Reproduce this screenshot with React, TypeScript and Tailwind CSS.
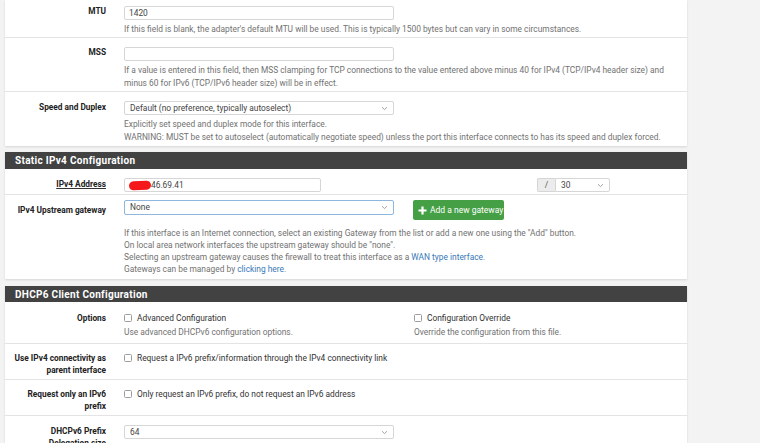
import React from "react";
import clsx from "clsx";

type RowProps = {
  label: React.ReactNode;
  labelClass?: string;
  contentClass?: string;
  last?: boolean;
  children?: React.ReactNode;
};

const Row = ({ label, labelClass, contentClass, last, children }: RowProps) => (
  <div className={clsx("flex", !last && "border-b border-[#e4e4e4]")}>
    <div
      className={clsx(
        "w-[101px] shrink-0 text-right text-[8.3px] font-bold leading-[12px] text-[#222]",
        labelClass
      )}
    >
      {label}
    </div>
    <div className={clsx("ml-[18px] min-w-0 flex-1", contentClass)}>{children}</div>
  </div>
);

const Chevron = () => (
  <svg width="7" height="5" viewBox="0 0 7 5" className="shrink-0">
    <path d="M1 1.2 L3.5 3.6 L6 1.2" fill="none" stroke="#9a9a9a" strokeWidth="0.9" />
  </svg>
);

const Input = ({ value, w = "w-[270px]" }: { value?: React.ReactNode; w?: string }) => (
  <div
    className={clsx(
      "flex h-[14px] items-center rounded-[2px] border border-[#d6d6d6] bg-white px-[4px] text-[8.4px] text-[#444]",
      w
    )}
  >
    {value}
  </div>
);

const Select = ({ value, focus }: { value: string; focus?: boolean }) => (
  <div
    className={clsx(
      "flex w-[270px] items-center justify-between rounded-[2px] border bg-white pl-[5px] pr-[5px] text-[8.4px] text-[#444]",
      focus ? "h-[15px] border-[#8fb6dc]" : "h-[14px] border-[#d6d6d6]"
    )}
  >
    <span>{value}</span>
    <Chevron />
  </div>
);

const Help = ({ children, className }: { children: React.ReactNode; className?: string }) => (
  <div className={clsx("text-[8.4px] text-[#727272]", className)}>{children}</div>
);

const Check = ({ label }: { label: string }) => (
  <div className="flex items-center text-[8.4px] leading-[12px] text-[#333]">
    <span className="mr-[5px] h-[8px] w-[8px] rounded-[1.5px] border border-[#9c9c9c] bg-white" />
    {label}
  </div>
);

const Heading = ({ title, className }: { title: string; className?: string }) => (
  <div
    className={clsx(
      "flex items-center bg-[#424242] pl-[10px] text-[10px] font-bold tracking-[0.3px] text-white",
      className
    )}
  >
    {title}
  </div>
);

export default function App() {
  return (
    <div className="h-[443px] w-[760px] overflow-hidden bg-[#f3f3f3] font-['Roboto',sans-serif]">
      <div className="ml-[5px] w-[682px]">
        {/* interface settings */}
        <div className="bg-white shadow-[0_1px_2px_rgba(0,0,0,0.12)]">
          <Row label="MTU" labelClass="pt-[5px]" contentClass="pt-[6px] pb-[1px]">
            <Input value="1420" />
            <Help className="mt-[3px] leading-[13px]">
              If this field is blank, the adapter's default MTU will be used. This is typically 1500
              bytes but can vary in some circumstances.
            </Help>
          </Row>
          <Row label="MSS" labelClass="pt-[8px]" contentClass="pt-[9px] pb-[1px]">
            <Input />
            <Help className="mt-[3px] leading-[13px]">
              If a value is entered in this field, then MSS clamping for TCP connections to the value
              entered above minus 40 for IPv4 (TCP/IPv4 header size) and
              <br />
              minus 60 for IPv6 (TCP/IPv6 header size) will be in effect.
            </Help>
          </Row>
          <Row label="Speed and Duplex" labelClass="pt-[9px]" contentClass="pt-[9px] pb-[2px]" last>
            <Select value="Default (no preference, typically autoselect)" />
            <Help className="mt-[3px] leading-[13px]">
              Explicitly set speed and duplex mode for this interface.
              <br />
              WARNING: MUST be set to autoselect (automatically negotiate speed) unless the port this
              interface connects to has its speed and duplex forced.
            </Help>
          </Row>
        </div>

        {/* static ipv4 */}
        <div className="mt-[6px] bg-white shadow-[0_1px_2px_rgba(0,0,0,0.12)]">
          <Heading title="Static IPv4 Configuration" className="h-[17px]" />
          <Row
            label={<span className="underline decoration-[#333] underline-offset-[1px]">IPv4 Address</span>}
            labelClass="pt-[9px]"
            contentClass="pt-[9px] pb-[2px] flex"
          >
            <Input
              w="w-[197px]"
              value={
                <>
                  <span className="h-[9px] w-[22px] -rotate-3 rounded-full bg-[#f4181a]" />
                  <span>46.69.41</span>
                </>
              }
            />
            <div className="ml-[216px] flex h-[14px]">
              <div className="flex w-[18px] items-center justify-center rounded-l-[2px] border border-r-0 border-[#d6d6d6] bg-[#ececec] text-[8.4px] text-[#555]">
                /
              </div>
              <div className="flex w-[55px] items-center justify-between rounded-r-[2px] border border-[#d6d6d6] bg-white px-[5px] text-[8.4px] text-[#444]">
                <span>30</span>
                <Chevron />
              </div>
            </div>
          </Row>
          <Row label="IPv4 Upstream gateway" labelClass="pt-[9px]" contentClass="pt-[5px] pb-[4px]" last>
            <div className="flex items-start">
              <Select value="None" focus />
              <button className="ml-[19px] flex h-[20px] w-[91px] items-center rounded-[2px] bg-[#45a045] pl-[5px] text-[8.5px] text-white">
                <svg width="9" height="9" viewBox="0 0 9 9" className="mr-[3px]">
                  <path d="M4.5 0.5 V8.5 M0.5 4.5 H8.5" stroke="white" strokeWidth="2.2" />
                </svg>
                Add a new gateway
              </button>
            </div>
            <Help className="mt-[7px] leading-[12px]">
              If this interface is an Internet connection, select an existing Gateway from the list or
              add a new one using the "Add" button.
              <br />
              On local area network interfaces the upstream gateway should be "none".
              <br />
              Selecting an upstream gateway causes the firewall to treat this interface as a{" "}
              <span className="text-[#3878b8]">WAN type interface</span>.
              <br />
              Gateways can be managed by <span className="text-[#3878b8]">clicking here</span>.
            </Help>
          </Row>
        </div>

        {/* dhcp6 */}
        <div className="mt-[7px] bg-white shadow-[0_1px_2px_rgba(0,0,0,0.12)]">
          <Heading title="DHCP6 Client Configuration" className="h-[16px]" />
          <Row label="Options" labelClass="pt-[10px]" contentClass="pt-[10px] pb-[5px] flex">
            <div className="w-[290px]">
              <Check label="Advanced Configuration" />
              <Help className="mt-[2px] leading-[12px]">Use advanced DHCPv6 configuration options.</Help>
            </div>
            <div>
              <Check label="Configuration Override" />
              <Help className="mt-[2px] leading-[12px]">Override the configuration from this file.</Help>
            </div>
          </Row>
          <Row
            label={
              <>
                Use IPv4 connectivity as
                <br />
                parent interface
              </>
            }
            labelClass="pt-[8px] pb-[3px]"
            contentClass="pt-[8px]"
          >
            <Check label="Request a IPv6 prefix/information through the IPv4 connectivity link" />
          </Row>
          <Row
            label={
              <>
                Request only an IPv6
                <br />
                prefix
              </>
            }
            labelClass="pt-[8px] pb-[3px]"
            contentClass="pt-[8px]"
          >
            <Check label="Only request an IPv6 prefix, do not request an IPv6 address" />
          </Row>
          <Row
            label={
              <>
                DHCPv6 Prefix
                <br />
                Delegation size
              </>
            }
            labelClass="pt-[9px] pb-[6px]"
            contentClass="pt-[9px]"
            last
          >
            <Select value="64" />
            <Help className="mt-[3px] leading-[12px]">
              The value in this field is the delegated prefix length provided by the DHCPv6 server.
              Normally specified by the ISP.
            </Help>
          </Row>
        </div>
      </div>
    </div>
  );
}
